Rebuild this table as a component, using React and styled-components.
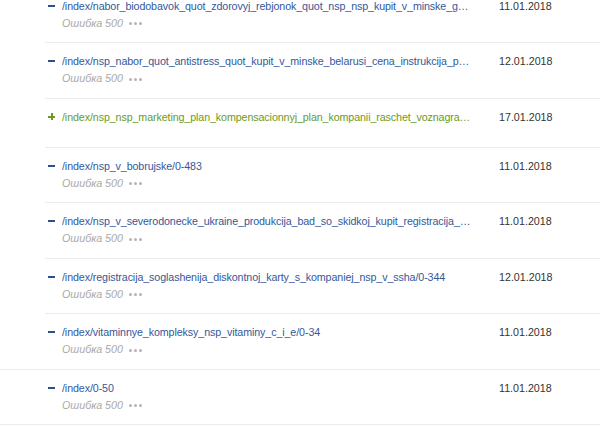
import React from "react";
import styled, { createGlobalStyle } from "styled-components";

const GlobalStyle = createGlobalStyle`
  html, body {
    margin: 0;
    padding: 0;
    background: #ffffff;
    overflow: hidden;
  }
  body {
    font-family: "Liberation Sans", Arial, sans-serif;
  }
`;

const List = styled.div`
  margin-top: -12.5px;
  display: flex;
  flex-direction: column;
`;

const Row = styled.div`
  display: flex;
  align-items: flex-start;
  margin-left: ${(p) => (p.$full ? "0" : "45px")};
  padding: 10px 0 ${(p) => (p.$short ? "22px" : "10.5px")} ${(p) => (p.$full ? "45px" : "0")};
  border-bottom: 1px solid #ebebeb;
`;

const IconCol = styled.div`
  width: 17px;
  height: 16px;
  flex: none;
  display: flex;
  align-items: center;
  padding-left: 3px;
  box-sizing: border-box;
`;

const Minus = styled.span`
  display: block;
  width: 7px;
  height: 2px;
  background: #2f4f8c;
`;

const Plus = styled.span`
  position: relative;
  display: block;
  width: 7px;
  height: 7px;
  &::before,
  &::after {
    content: "";
    position: absolute;
    background: #6a9a25;
  }
  &::before {
    left: 0;
    right: 0;
    top: 2.5px;
    height: 2px;
  }
  &::after {
    top: 0;
    bottom: 0;
    left: 2.5px;
    width: 2px;
  }
`;

const Main = styled.div`
  width: 437px;
  flex: none;
  display: flex;
  flex-direction: column;
`;

const Title = styled.a`
  display: block;
  width: 410px;
  font-size: 10.7px;
  line-height: 16px;
  letter-spacing: -0.1px;
  color: ${(p) => (p.$added ? "#6a9a25" : "#34589a")};
  text-decoration: none;
  white-space: nowrap;
  overflow: hidden;
  text-overflow: ellipsis;
`;

const ErrorLine = styled.div`
  display: flex;
  align-items: center;
  gap: 6px;
  height: 18px;
  font-size: 10.7px;
  font-style: italic;
  color: #a9a9a9;
`;

const Dots = styled.span`
  display: inline-flex;
  gap: 2px;
  margin-top: 2px;
`;

const Dot = styled.span`
  width: 3px;
  height: 3px;
  border-radius: 50%;
  background: #b4b4b4;
`;

const DateCell = styled.div`
  font-size: 10.7px;
  line-height: 16px;
  color: #333333;
`;

const rows = [
  { path: "/index/nabor_biodobavok_quot_zdorovyj_rebjonok_quot_nsp_nsp_kupit_v_minske_gomele_brest", date: "11.01.2018" },
  { path: "/index/nsp_nabor_quot_antistress_quot_kupit_v_minske_belarusi_cena_instrukcija_po_primeneniju", date: "12.01.2018" },
  { path: "/index/nsp_nsp_marketing_plan_kompensacionnyj_plan_kompanii_raschet_voznagrazhdenija", date: "17.01.2018", added: true },
  { path: "/index/nsp_v_bobrujske/0-483", date: "11.01.2018" },
  { path: "/index/nsp_v_severodonecke_ukraine_produkcija_bad_so_skidkoj_kupit_registracija_v_nsp", date: "11.01.2018" },
  { path: "/index/registracija_soglashenija_diskontnoj_karty_s_kompaniej_nsp_v_ssha/0-344", date: "12.01.2018" },
  { path: "/index/vitaminnye_kompleksy_nsp_vitaminy_c_i_e/0-34", date: "11.01.2018", full: true },
  { path: "/index/0-50", date: "11.01.2018", full: true },
];

export default function App() {
  return (
    <>
      <GlobalStyle />
      <List>
        {rows.map((r) => (
          <Row key={r.path} $full={r.full} $short={r.added}>
            <IconCol>{r.added ? <Plus /> : <Minus />}</IconCol>
            <Main>
              <Title href="#" $added={r.added}>
                {r.path}
              </Title>
              {!r.added && (
                <ErrorLine>
                  Ошибка 500
                  <Dots>
                    <Dot />
                    <Dot />
                    <Dot />
                  </Dots>
                </ErrorLine>
              )}
            </Main>
            <DateCell>{r.date}</DateCell>
          </Row>
        ))}
      </List>
    </>
  );
}
